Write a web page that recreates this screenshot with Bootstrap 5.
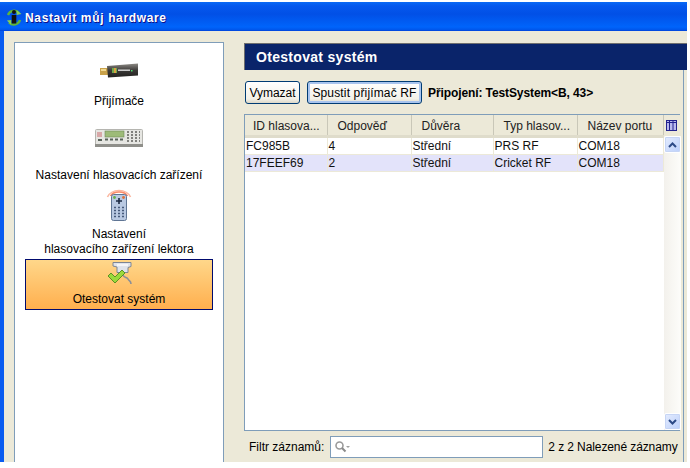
<!DOCTYPE html>
<html lang="cs">
<head>
    <meta charset="UTF-8">
    <title>Nastavit můj hardware</title>
    <link href="https://cdn.jsdelivr.net/npm/bootstrap@5.3.3/dist/css/bootstrap.min.css" rel="stylesheet">
    <style>
        body {
            background-color: #fff;
            font-family: "Liberation Sans", Arial, sans-serif;
            font-size: 12px;
            color: #000;
            overflow: hidden;
        }

        .xp-window {
            width: 687px;
            height: 462px;
            background-color: #ece9d8;
            border-left: 4px solid #0a5cf0;
            border-right: 0;
        }

        .xp-title {
            height: 31px;
            margin-left: -4px;
            padding: 4px 0 0 6px;
            gap: 3px;
            color: #fff;
            font-weight: 700;
            font-size: 12px;
            letter-spacing: .65px;
            text-shadow: 1px 1px 0 #0f1089;
            background: linear-gradient(#fff 0, #fff 2px, #0a6af5 2px, #0558ee 6px, #0250e6 14px, #0064fb 27px, #0055ea 30px, #003dd7 31px);
        }

        .side-panel {
            width: 210px;
            margin: 11px 0 0 10px;
            padding: 10px 10px 0;
            background-color: #fff;
            border: 1px solid #7f9db9;
            border-bottom: 0;
        }

        .side-item {
            text-align: center;
            line-height: 16px;
            border: 1px solid transparent;
            white-space: nowrap;
        }

        .side-item svg { display: block; }
        .item-receiver { height: 66px; padding-top: 9px; gap: 14px; }
        .item-clicker { height: 67px; padding-top: 9px; gap: 20px; }
        .item-teacher { height: 73px; padding-top: 1px; gap: 6px; line-height: 15px; }

        .item-active {
            height: 51px;
            padding-top: 2px;
            gap: 6px;
            background: linear-gradient(#ffd78a, #ffaf4e);
            border-color: #000a6e;
        }

        .main-pane {
            margin: 12px 0 0 20px;
        }

        .pane-head {
            height: 27px;
            padding-left: 11px;
            background-color: #0a246a;
            border-top: 1px solid #6e6e6e;
            border-left: 1px solid #6e6e6e;
            color: #fff;
            font-weight: 700;
            font-size: 14px;
            letter-spacing: .3px;
        }

        .pane-inner {
            width: 440px;
            border-right: 1px solid #7f9db9;
        }

        .tool-row {
            height: 23px;
            margin: 11px 0 0 1px;
            gap: 7px;
        }

        .xp-btn {
            height: 23px;
            padding: 0;
            font-size: 12px;
            line-height: 1;
            color: #000;
            border: 1px solid #003c74;
            border-radius: 3px;
            background: linear-gradient(#fff, #f3f1e8 80%, #dcd8c8);
        }

        .btn-clear { width: 55px; }
        .btn-start {
            width: 115px;
            letter-spacing: .15px;
            box-shadow: inset 0 0 0 2px #a8c4ee;
        }

        .conn-text {
            margin-left: -1px;
            font-weight: 700;
            letter-spacing: -.1px;
            white-space: nowrap;
        }

        .grid-frame {
            height: 317px;
            margin-top: 10px;
            width: 436px;
            background-color: #fff;
            border: 1px solid #7f9db9;
        }

        .grid-table {
            width: 418px;
            table-layout: fixed;
            margin: 0;
            font-size: 12px;
            line-height: 16px;
        }

        .grid-table th {
            height: 21px;
            padding: 2px 0 0 10px;
            font-weight: 400;
            color: #222;
            background-color: #ece9d8;
            border-width: 0 1px 3px 0;
            border-style: solid;
            border-right-color: #c9c7b8;
            border-bottom-color: #dfdccb;
            white-space: nowrap;
            overflow: hidden;
            vertical-align: middle;
        }

        .grid-table th:first-child { padding-left: 8px; }

        .grid-table td {
            height: 17px;
            padding: 0 0 0 1px;
            color: #111;
            border-width: 0 1px 1px 0;
            border-style: solid;
            border-color: #ece9d8;
            background-color: #fff;
        }

        .grid-table tr.row-alt td { background-color: #e3e3fa; }

        .grid-side { width: 17px; }
        .grid-corner {
            height: 21px;
            padding-right: 2px;
            background-color: #ece9d8;
            flex-shrink: 0;
        }

        .scroll-track {
            background: linear-gradient(90deg, #f3f1ec, #fdfdfa);
        }

        .scroll-btn {
            height: 17px;
            background: linear-gradient(135deg, #e4ecfe, #bcd0fb);
            border: 1px solid #fff;
            border-radius: 2px;
            box-shadow: 0 0 0 1px #c6d5f5 inset;
        }

        .filter-row {
            height: 22px;
            margin-top: 5px;
            padding-left: 5px;
            gap: 5px;
            white-space: nowrap;
        }

        .filter-box {
            width: 213px;
            height: 22px;
            margin-left: 1px;
            padding-left: 4px;
            background-color: #fff;
            border: 1px solid #7f9db9;
        }

        .filter-input {
            height: 18px;
            padding: 0 3px;
            font-size: 12px;
            border: 0;
            border-radius: 0;
        }

        .filter-count { letter-spacing: -.1px; }
    </style>
</head>
<body>
    <div class="xp-window d-flex flex-column">
        <div class="xp-title d-flex align-items-center">
            <svg width="16" height="17" viewBox="0 0 16 17">
                <path d="M2 6 A6.5 6.5 0 0 1 13 4" fill="none" stroke="#5fb53a" stroke-width="2.4"/>
                <path d="M14 11 A6.5 6.5 0 0 1 3 13.5" fill="none" stroke="#5fb53a" stroke-width="2.4"/>
                <path d="M11 1.5 L15.5 5 L10.5 6 Z M5 15.5 L.8 11.5 L5.5 11 Z" fill="#8ad05a"/>
                <circle cx="8" cy="3" r="2" fill="#111"/>
                <rect x="5.7" y="6" width="4.6" height="8.5" fill="#111"/>
            </svg>
            <span>Nastavit můj hardware</span>
        </div>

        <div class="d-flex flex-grow-1">
            <div class="side-panel">
                <div class="side-item item-receiver d-flex flex-column align-items-center">
                    <svg width="39" height="16" viewBox="0 0 39 16">
                        <defs>
                            <linearGradient id="usbBody" x1="0" y1="0" x2="0" y2="1">
                                <stop offset="0" stop-color="#8d8a85"/>
                                <stop offset=".5" stop-color="#3a3836"/>
                                <stop offset="1" stop-color="#22211f"/>
                            </linearGradient>
                        </defs>
                        <rect x="0" y="5" width="8" height="7" fill="#c9a24a"/>
                        <rect x="1" y="6" width="5" height="2" fill="#f0d890"/>
                        <path d="M7 3 L38 .5 L38 12.5 L8 14.5 Z" fill="url(#usbBody)"/>
                        <rect x="12" y="5" width="5" height="5" fill="#6fa84a"/>
                        <rect x="14" y="5" width="2" height="5" fill="#d8a040"/>
                        <rect x="18" y="6.5" width="12" height="1.4" fill="#ddd"/>
                        <rect x="31" y="7" width="1.5" height="1.5" fill="#4ce070"/>
                    </svg>
                    <span>Přijímače</span>
                </div>
                <div class="side-item item-clicker d-flex flex-column align-items-center">
                    <svg width="48" height="18" viewBox="0 0 48 18">
                        <rect x=".5" y=".5" width="47" height="17" rx="1" fill="#e6e6e2" stroke="#b5b5b0"/>
                        <rect x="0" y="15" width="48" height="3" fill="#8f8f8a"/>
                        <rect x="10" y="2" width="19" height="6" fill="#9dbb78" stroke="#6f8a58" stroke-width=".6"/>
                        <path d="M2 3h5v5H2z" fill="#d8a8a8"/>
                        <path d="M10 10.5h3M15 10.5h3M20 10.5h3M25 10.5h3M3 11h4" stroke="#59635a" stroke-width="2"/>
                        <path d="M32 3h2M36 3h2M40 3h2M44 3h1M32 6h2M36 6h2M40 6h2M44 6h1M32 9h2M36 9h2M40 9h2M44 9h1M32 12h2M36 12h2M40 12h2M44 12h1" stroke="#60605c" stroke-width="1.6"/>
                    </svg>
                    <span>Nastavení hlasovacích zařízení</span>
                </div>
                <div class="side-item item-teacher d-flex flex-column align-items-center">
                    <svg width="28" height="33" viewBox="0 0 28 33">
                        <path d="M2.5 9 A12 9 0 0 1 25.5 9" fill="none" stroke="#fbb7a0" stroke-width="1.6"/>
                        <path d="M5.5 8 A9 6 0 0 1 22.5 8" fill="none" stroke="#f98a68" stroke-width="1.6"/>
                        <rect x="6.5" y="6.5" width="15" height="26" rx="2" fill="#b9c9e2" stroke="#5f7594"/>
                        <circle cx="9.5" cy="9.5" r="1.4" fill="#6ab04a"/>
                        <circle cx="18.5" cy="9.5" r="1.4" fill="#e07038"/>
                        <path d="M14 10v6M11 13h6" stroke="#1d2b44" stroke-width="1.6"/>
                        <path d="M9 19.5h2M13 19.5h2M17 19.5h2M9 22.5h2M13 22.5h2M17 22.5h2M9 25.5h2M13 25.5h2M17 25.5h2M9 28.5h2M13 28.5h2M17 28.5h2" stroke="#46597a" stroke-width="1.6"/>
                    </svg>
                    <span>Nastavení<br>hlasovacího zařízení lektora</span>
                </div>
                <div class="side-item item-active d-flex flex-column align-items-center">
                    <svg width="25" height="23" viewBox="0 0 25 23">
                        <path d="M6 .5h18v4l-3 1v5H10V5L6 4z" fill="#dfe3ea" stroke="#7d8594"/>
                        <rect x="10" y="2" width="11" height="2" fill="#f4f5f8"/>
                        <path d="M16 13c1 3 4 2 5 4s3 2 3 5" fill="none" stroke="#8b8f98" stroke-width="1.6"/>
                        <path d="M1 14l3-3 4 4 7-7 3 3L8 21z" fill="#9bd93b" stroke="#4f8a20" stroke-width=".9"/>
                    </svg>
                    <span>Otestovat systém</span>
                </div>
            </div>

            <div class="main-pane flex-grow-1 d-flex flex-column">
                <div class="pane-head d-flex align-items-center flex-shrink-0">Otestovat systém</div>
                <div class="pane-inner flex-grow-1">
                    <div class="tool-row d-flex align-items-center">
                        <button type="button" class="btn xp-btn btn-clear">Vymazat</button>
                        <button type="button" class="btn xp-btn btn-start">Spustit přijímač RF</button>
                        <span class="conn-text">Připojení: TestSystem&lt;B, 43&gt;</span>
                    </div>

                    <div class="grid-frame d-flex">
                        <div class="flex-grow-1">
                            <table class="table grid-table">
                                <colgroup>
                                    <col style="width: 82px">
                                    <col style="width: 84px">
                                    <col style="width: 82px">
                                    <col style="width: 84px">
                                    <col style="width: 86px">
                                </colgroup>
                                <thead>
                                    <tr>
                                        <th>ID hlasova...</th>
                                        <th>Odpověď</th>
                                        <th>Důvěra</th>
                                        <th>Typ hlasov...</th>
                                        <th>Název portu</th>
                                    </tr>
                                </thead>
                                <tbody>
                                    <tr>
                                        <td>FC985B</td>
                                        <td>4</td>
                                        <td>Střední</td>
                                        <td>PRS RF</td>
                                        <td>COM18</td>
                                    </tr>
                                    <tr class="row-alt">
                                        <td>17FEEF69</td>
                                        <td>2</td>
                                        <td>Střední</td>
                                        <td>Cricket RF</td>
                                        <td>COM18</td>
                                    </tr>
                                </tbody>
                            </table>
                        </div>
                        <div class="grid-side d-flex flex-column flex-shrink-0">
                            <div class="grid-corner d-flex align-items-center justify-content-center">
                                <svg width="11" height="11" viewBox="0 0 11 11">
                                    <rect x=".5" y=".5" width="10" height="10" fill="#b9b9ee" stroke="#23238e"/>
                                    <path d="M3.5 1v9M7 1v9M1 2.5h9" stroke="#23238e"/>
                                </svg>
                            </div>
                            <div class="scroll-track flex-grow-1 d-flex flex-column justify-content-between">
                                <div class="scroll-btn d-flex align-items-center justify-content-center">
                                    <svg width="9" height="6" viewBox="0 0 9 6"><path d="M1 5l3.5-3.5L8 5" fill="none" stroke="#2c4a86" stroke-width="2"/></svg>
                                </div>
                                <div class="scroll-btn d-flex align-items-center justify-content-center">
                                    <svg width="9" height="6" viewBox="0 0 9 6"><path d="M1 1l3.5 3.5L8 1" fill="none" stroke="#2c4a86" stroke-width="2"/></svg>
                                </div>
                            </div>
                        </div>
                    </div>

                    <div class="filter-row d-flex align-items-center">
                        <span>Filtr záznamů:</span>
                        <div class="filter-box d-flex align-items-center">
                            <svg width="16" height="12" viewBox="0 0 16 12" class="flex-shrink-0">
                                <circle cx="4.5" cy="4.5" r="3.5" fill="none" stroke="#9a9a9a" stroke-width="1.6"/>
                                <path d="M7 7l3.5 3.5" stroke="#8a8a8a" stroke-width="2"/>
                                <path d="M11 5h4l-2 2z" fill="#a0a0a0"/>
                            </svg>
                            <input class="form-control filter-input" type="text" aria-label="Filtr záznamů">
                        </div>
                        <span class="filter-count">2 z 2 Nalezené záznamy</span>
                    </div>
                </div>
            </div>
        </div>
    </div>

    <script src="https://cdn.jsdelivr.net/npm/bootstrap@5.3.3/dist/js/bootstrap.bundle.min.js"></script>
</body>
</html>
